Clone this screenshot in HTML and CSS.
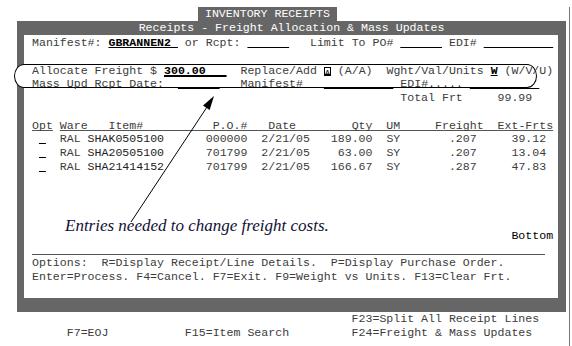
FILE: index.html
```html
<!DOCTYPE html>
<html lang="en">
<head>
    <meta charset="UTF-8">
    <title>Inventory Receipts</title>
    <link rel="stylesheet" href="styles.css">
</head>
<body>
    <div class="page">
        <div class="tab">INVENTORY RECEIPTS</div>

        <div class="frame">
            <div class="frame-title">Receipts - Freight Allocation &amp; Mass Updates</div>
            <div class="screen">
                <div class="row">Manifest#: <span class="fld hi">GBRANNEN2 </span> or Rcpt: <span class="fld">      </span>   Limit To PO# <span class="fld">      </span> EDI# <span class="fld">          </span></div>
                <div class="row"></div>
                <div class="callout">
                    <div class="row">Allocate Freight $ <span class="fld thick hi">300.00   </span>  Replace/Add <span class="cur">A</span> (A/A)  Wght/Val/Units <span class="fld hi">W</span> (W/V/U)</div>
                    <div class="row">Mass Upd Rcpt Date:  <span class="fld">      </span>   Manifest#   <span class="fld">          </span> EDI#..... <span class="fld">          </span></div>
                </div>
                <div class="row">                                                     Total Frt     99.99</div>
                <div class="row"></div>
                <div class="row"><span class="head">Opt</span> <span class="head">Ware   Item#          P.O.#   Date        Qty  UM     Freight  Ext-Frts</span></div>
                <div class="row"> <span class="fld"> </span>  RAL <span class="item">SHAK0505100</span>      000000  2/21/05   189.00  SY       .207     39.12</div>
                <div class="row"> <span class="fld"> </span>  RAL <span class="item">SHA20505100</span>      701799  2/21/05    63.00  SY       .207     13.04</div>
                <div class="row"> <span class="fld"> </span>  RAL <span class="item">SHA21414152</span>      701799  2/21/05   166.67  SY       .287     47.83</div>
                <div class="row"></div>
                <div class="row"></div>
                <div class="row"></div>
                <div class="row"></div>
                <div class="row bottom">Bottom</div>
                <div class="sep"></div>
                <div class="row">Options:  R=Display Receipt/Line Details.  P=Display Purchase Order.</div>
                <div class="row">Enter=Process. F4=Cancel. F7=Exit. F9=Weight vs Units. F13=Clear Frt.</div>
            </div>
        </div>

        <div class="keys">
            <div class="row">                                              F23=Split All Receipt Lines</div>
            <div class="row">     F7=EOJ           F15=Item Search         F24=Freight &amp; Mass Updates</div>
        </div>

        <!-- annotation drawn over the screen capture -->
        <svg class="arrow" width="572" height="346" viewBox="0 0 572 346">
            <line x1="131" y1="215" x2="207" y2="100" stroke="#000" stroke-width="1"/>
            <polygon points="214,89 209.6,102.9 203,98.5" fill="#000"/>
        </svg>
        <div class="note">Entries needed to change freight costs.</div>
    </div>
</body>
</html>
```

FILE: styles.css
```css
body {
    margin: 0;
    background-color: #fff;
}

.page {
    position: relative;
    width: 569px;
    height: 346px;
    border-right: 1px solid #777;
    font-family: "Liberation Mono", monospace;
    font-size: 11.58px;
    color: #3c3c3c;
}

.tab {
    margin: 7px 0 0 198px;
    width: 139px;
    height: 14px;
    line-height: 14px;
    background-color: #666;
    color: #fff;
    text-align: center;
    white-space: pre;
}

/* grey window frame around the 5250 screen */
.frame {
    position: relative;
    z-index: 0;
    margin-left: 17px;
    width: 549px;
    box-sizing: border-box;
    background-color: #fff;
    border-style: solid;
    border-color: #666;
    border-width: 0 8px 14px 7px;
}

.frame-title {
    margin: 0 -8px 0 -7px;
    height: 14px;
    line-height: 14px;
    background-color: #666;
    color: #fff;
    text-align: center;
    white-space: pre;
}

.screen {
    height: 263px;
    box-sizing: border-box;
    padding: 1px 0 0 8px;
}

.row {
    height: 13.75px;
    line-height: 13.75px;
    white-space: pre;
}

.fld {
    text-decoration: underline;
    text-decoration-color: #000;
    text-decoration-thickness: 1px;
    text-underline-offset: 1px;
    text-decoration-skip-ink: none;
}

.thick {
    text-decoration-thickness: 2px;
}

.hi {
    color: #000;
    font-weight: bold;
}

.item {
    color: #222;
}

.cur {
    display: inline-block;
    width: 7px;
    height: 9px;
    line-height: 9px;
    box-sizing: border-box;
    border: 1px solid #000;
    border-bottom-width: 2px;
    font-size: 8px;
    text-align: center;
    color: #000;
    vertical-align: -1px;
}

.head {
    text-decoration: underline;
    text-decoration-color: #555;
    text-decoration-thickness: 1px;
    text-underline-offset: 1px;
    text-decoration-skip-ink: none;
}

.bottom {
    width: 75ch;
    text-align: right;
    color: #000;
}

.sep {
    width: 513px;
    height: 11.75px;
    border-bottom: 1px solid #555;
    margin-bottom: 1px;
}

/* oval callout round the allocation fields */
.callout {
    position: relative;
}

.callout::before {
    content: "";
    position: absolute;
    z-index: -1;
    left: -18px;
    right: 21px;
    top: 0;
    height: 24px;
    box-sizing: border-box;
    border: 1px solid #000;
    border-radius: 10px / 12px;
    background-color: #fff;
}

.keys {
    margin-left: 32px;
}

.arrow {
    position: absolute;
    left: 0;
    top: 0;
    pointer-events: none;
}

.note {
    position: absolute;
    left: 65px;
    top: 211px;
    font-family: "Liberation Serif", serif;
    font-style: italic;
    font-size: 17px;
    line-height: 16px;
    color: #111133;
    white-space: pre;
}
```
